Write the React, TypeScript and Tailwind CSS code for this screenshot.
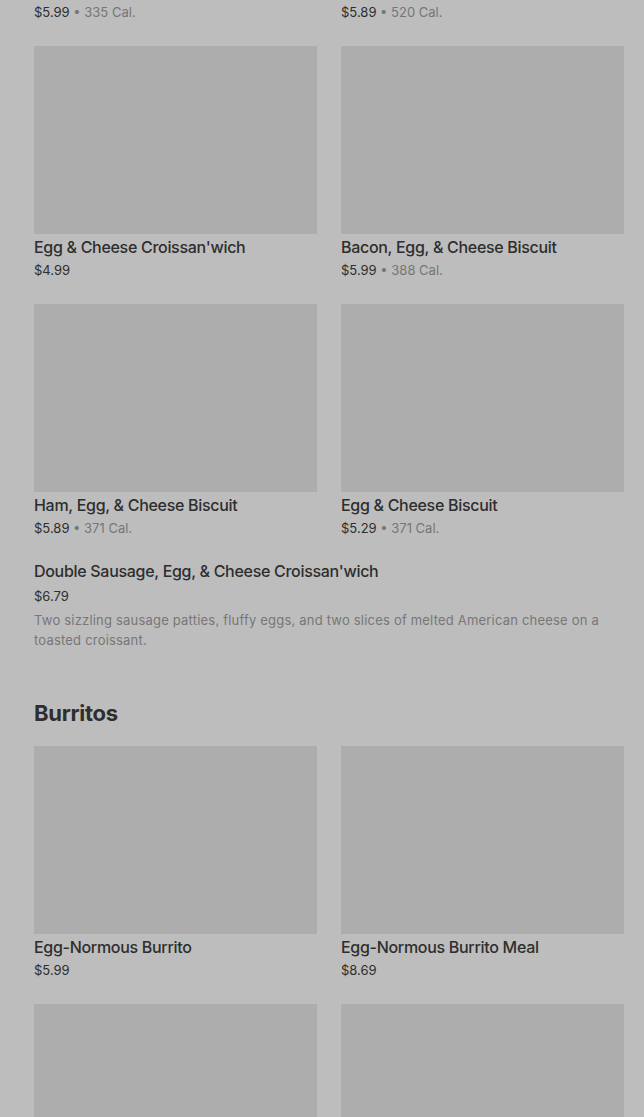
import React from "react";

type Item = { name: string; price: string; cal?: string };

const breakfast: Item[] = [
  { name: "Egg & Cheese Croissan'wich", price: "$4.99" },
  { name: "Bacon, Egg, & Cheese Biscuit", price: "$5.99", cal: "388 Cal." },
  { name: "Ham, Egg, & Cheese Biscuit", price: "$5.89", cal: "371 Cal." },
  { name: "Egg & Cheese Biscuit", price: "$5.29", cal: "371 Cal." },
];

const burritos: Item[] = [
  { name: "Egg-Normous Burrito", price: "$5.99" },
  { name: "Egg-Normous Burrito Meal", price: "$8.69" },
];

const Price = ({ item }: { item: Item }) => (
  <p className="text-[13px] leading-5 text-[#2e2e2e]">
    {item.price}
    {item.cal && <span className="text-[#767676]"> • {item.cal}</span>}
  </p>
);

const Card = ({ item }: { item: Item }) => (
  <div className="flex flex-col">
    <div className="h-[188px] w-full bg-[#adadad]" />
    <p className="text-[16px] leading-[26px] font-medium tracking-[-0.3px] text-[#2e2e2e] truncate">
      {item.name}
    </p>
    <Price item={item} />
  </div>
);

const Grid = ({ items, className = "" }: { items: Item[]; className?: string }) => (
  <div className={`grid grid-cols-2 gap-x-6 gap-y-6 ${className}`}>
    {items.map((it, i) => (
      <Card key={i} item={it} />
    ))}
  </div>
);

export default function App() {
  return (
    <div
      className="h-[1117px] overflow-hidden bg-[#bdbdbd] pl-[34px] pr-[20px] pt-[2px]"
      style={{ fontFamily: "Inter, 'Noto Sans', sans-serif" }}
    >
      <div className="grid grid-cols-2 gap-x-6">
        <Price item={{ name: "", price: "$5.99", cal: "335 Cal." }} />
        <Price item={{ name: "", price: "$5.89", cal: "520 Cal." }} />
      </div>
      <Grid items={breakfast} className="mt-6" />
      <div className="mt-[21px]">
        <p className="text-[16px] leading-6 font-medium tracking-[-0.3px] text-[#2e2e2e]">
          Double Sausage, Egg, &amp; Cheese Croissan'wich
        </p>
        <p className="mt-[2px] text-[13px] leading-[22px] text-[#2e2e2e]">$6.79</p>
        <p className="mt-[3px] text-[13px] leading-5 tracking-[0.2px] text-[#777777] pr-4">
          Two sizzling sausage patties, fluffy eggs, and two slices of melted American cheese on a
          toasted croissant.
        </p>
      </div>
      <h2 className="mt-[47px] text-[22px] leading-8 font-bold tracking-[-0.3px] text-[#2e2e2e]">
        Burritos
      </h2>
      <Grid items={burritos} className="mt-[17px]" />
      <div className="mt-6 grid grid-cols-2 gap-x-6">
        <div className="h-[188px] bg-[#adadad]" />
        <div className="h-[188px] bg-[#adadad]" />
      </div>
    </div>
  );
}
